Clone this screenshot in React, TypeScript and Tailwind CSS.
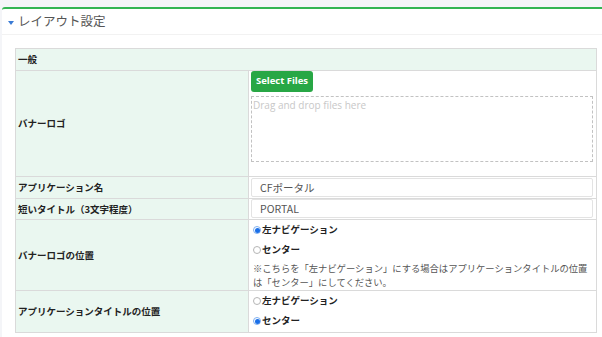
import React from "react";

const font = { fontFamily: '"Noto Sans CJK JP", "Noto Sans", sans-serif' };

function Radio({ checked, label }: { checked?: boolean; label: string }) {
  return (
    <div className="flex items-center h-[20px]">
      <span
        className={
          checked
            ? "w-[8px] h-[8px] rounded-full border border-[#7fb0f0] bg-white flex items-center justify-center"
            : "w-[8px] h-[8px] rounded-full border border-[#b5b5b5] bg-white"
        }
      >
        {checked && <span className="w-[5px] h-[5px] rounded-full bg-[#1a6fe8]" />}
      </span>
      <span className="ml-[1px] text-[9.5px] font-bold text-[#222] leading-none">{label}</span>
    </div>
  );
}

export default function App() {
  return (
    <div className="w-[602px] h-[337px] bg-[#f4f5f8] overflow-hidden pt-[7px] pl-[2px]" style={font}>
      <div className="bg-white h-[330px] border-t-2 border-[#34b553] rounded-tl-[3px]">
        <div className="h-[26px] flex items-center border-b border-[#f2f2f2]">
          <svg width="6" height="4" viewBox="0 0 6 4" className="ml-[6px] mt-[2px]">
            <path d="M0 0 L6 0 L3 4 Z" fill="#3a7bd5" />
          </svg>
          <span className="ml-[4px] text-[12.5px] text-[#555] leading-none">レイアウト設定</span>
        </div>
        <div className="ml-[13px] mr-[5px] mt-[13px] border border-[#dadada]">
          <div className="h-[22px] border-b border-[#dadada] bg-[#eaf7f0] flex items-center pl-[2px]">
            <span className="text-[9.5px] font-bold text-[#222]">一般</span>
          </div>
          <div className="h-[106px] border-b border-[#dadada] flex">
            <div className="w-[233px] border-r border-[#dadada] bg-[#eaf7f0] flex items-center pl-[2px]">
              <span className="text-[9.5px] font-bold text-[#222]">バナーロゴ</span>
            </div>
            <div className="flex-1 pl-[2px] pr-[3px]">
              <button
                className="w-[62px] h-[21px] rounded-[3px] bg-[#28a745] text-white text-[9.5px] font-bold flex items-center justify-center"
                style={{ fontFamily: '"Open Sans", "Noto Sans", sans-serif' }}
              >
                Select Files
              </button>
              <div
                className="mt-[4px] h-[66px] border border-dashed border-[#c2c2c2] px-[1px] pt-[2px] text-[10px] text-[#c8c8c8] leading-[12px]"
                style={{ fontFamily: '"Open Sans", "Noto Sans", sans-serif' }}
              >
                Drag and drop files here
              </div>
            </div>
          </div>
          <div className="h-[22px] border-b border-[#dadada] flex">
            <div className="w-[233px] border-r border-[#dadada] bg-[#eaf7f0] flex items-center pl-[2px]">
              <span className="text-[9.5px] font-bold text-[#222]">アプリケーション名</span>
            </div>
            <div className="flex-1 pl-[2px] pr-[3px] pt-[1px]">
              <div className="h-[19px] border border-[#e3e3e3] rounded-[2px] flex items-center pl-[8px]">
                <span className="text-[10.5px] text-[#555]">CFポータル</span>
              </div>
            </div>
          </div>
          <div className="h-[21px] border-b border-[#dadada] flex">
            <div className="w-[233px] border-r border-[#dadada] bg-[#eaf7f0] flex items-center pl-[2px]">
              <span className="text-[9.5px] font-bold text-[#222]">短いタイトル（3文字程度）</span>
            </div>
            <div className="flex-1 pl-[2px] pr-[3px]">
              <div className="h-[19px] border border-[#e3e3e3] rounded-[2px] flex items-center pl-[8px]">
                <span className="text-[10.5px] text-[#555]">PORTAL</span>
              </div>
            </div>
          </div>
          <div className="h-[71px] border-b border-[#dadada] flex">
            <div className="w-[233px] border-r border-[#dadada] bg-[#eaf7f0] flex items-center pl-[2px]">
              <span className="text-[9.5px] font-bold text-[#222]">バナーロゴの位置</span>
            </div>
            <div className="flex-1 pl-[4px] pr-[1px]">
              <Radio checked label="左ナビゲーション" />
              <Radio label="センター" />
              <div className="text-[9.3px] text-[#555] leading-[14px] mt-[1px] whitespace-nowrap">
                ※こちらを「左ナビゲーション」にする場合はアプリケーションタイトルの位置
                <br />
                は「センター」にしてください。
              </div>
            </div>
          </div>
          <div className="h-[41px] flex">
            <div className="w-[233px] border-r border-[#dadada] bg-[#eaf7f0] flex items-center pl-[2px]">
              <span className="text-[9.5px] font-bold text-[#222]">アプリケーションタイトルの位置</span>
            </div>
            <div className="flex-1 pl-[4px] pr-[3px]">
              <Radio label="左ナビゲーション" />
              <Radio checked label="センター" />
            </div>
          </div>
        </div>
      </div>
    </div>
  );
}
